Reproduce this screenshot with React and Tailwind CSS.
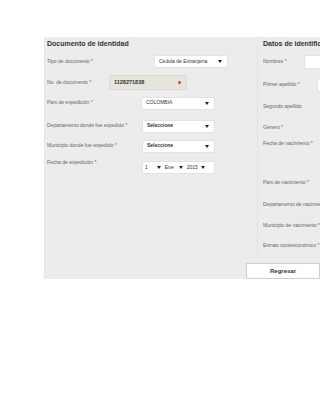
const Tri = () => (
  <svg width="4" height="3" viewBox="0 0 4 3" className="shrink-0">
    <path d="M0 0 L4 0 L2 3 Z" fill="#222" />
  </svg>
);

const Sel = ({ text, w, bold }) => (
  <div
    className={`flex h-[13px] items-center justify-between rounded-[2px] border border-[#e2e2e2] bg-white pl-[4px] pr-[5px] text-[5px] text-[#333] ${bold ? "font-bold" : ""}`}
    style={{ width: w }}
  >
    <span>{text}</span>
    <Tri />
  </div>
);

const Label = ({ children, w }) => (
  <div className="shrink-0 pl-[2px] text-[5px] text-[#666]" style={{ width: w }}>
    {children}
  </div>
);

export default function App() {
  return (
    <div
      className="h-[414px] w-[320px] overflow-hidden bg-white pl-[44px] pt-[37px]"
      style={{ fontFamily: '"Liberation Sans", Arial, sans-serif' }}
    >
      <div className="flex h-[242px] w-[276px] flex-col border-l border-[#e6e6e6] bg-[#ececec]">
        <div className="flex h-[219px]">
          {/* Left column */}
          <div className="flex w-[212px] shrink-0 flex-col">
            <div className="flex h-[14px] items-center pl-[2px] text-[7px] font-bold text-[#333]">
              Documento de identidad
            </div>
            <div className="mt-[3px] flex h-[15px] items-center">
              <Label w={109}>Tipo de documento *</Label>
              <Sel text="Cédula de Extranjería" w={74} />
            </div>
            <div className="mt-[5px] flex h-[17px] items-center">
              <Label w={64}>No. de documento *</Label>
              <div className="flex h-[15px] w-[78px] items-center justify-between rounded-[2px] border border-[#dcdad0] bg-[#e6e4dc] pl-[4px] pr-[5px]">
                <span className="text-[5.5px] font-bold text-[#333]">1128271838</span>
                <span className="h-[3px] w-[3px] rounded-full bg-[#e0383c]" />
              </div>
            </div>
            <div className="mt-[4px] flex h-[16px] items-center">
              <Label w={96}>País de expedición *</Label>
              <Sel text="COLOMBIA" w={74} />
            </div>
            <div className="mt-[7px] flex h-[16px] items-center">
              <Label w={97}>Departamento donde fue expedido *</Label>
              <Sel text="Seleccione" w={73} bold />
            </div>
            <div className="mt-[4px] flex h-[16px] items-center">
              <Label w={97}>Municipio donde fue expedido *</Label>
              <Sel text="Seleccione" w={73} bold />
            </div>
            <div className="mt-[4px] flex h-[17px] items-start">
              <div className="w-[97px] shrink-0 pl-[2px] pt-[1px] text-[5px] text-[#666]">
                Fecha de expedición *
              </div>
              <div className="mt-[3px] flex h-[13px] w-[73px] items-center rounded-[2px] border border-[#e2e2e2] bg-white pl-[2px] text-[5px] text-[#333]">
                <span>1</span>
                <span className="ml-[9px]"><Tri /></span>
                <span className="ml-[4px]">Ene</span>
                <span className="ml-[5px]"><Tri /></span>
                <span className="ml-[4px]">2015</span>
                <span className="ml-[3px]"><Tri /></span>
              </div>
            </div>
          </div>
          {/* Divider */}
          <div className="w-px shrink-0 bg-[#e2e2e2]" />
          {/* Right column */}
          <div className="flex min-w-0 flex-1 flex-col overflow-hidden pl-[5px]">
            <div className="flex h-[14px] items-center whitespace-nowrap text-[7px] font-bold text-[#333]">
              Datos de identificación
            </div>
            <div className="mt-[4px] flex h-[14px] items-center">
              <div className="w-[41px] shrink-0 whitespace-nowrap text-[5px] text-[#666]">Nombres *</div>
              <div className="h-[14px] w-[30px] shrink-0 rounded-[2px] border border-[#e2e2e2] bg-white" />
            </div>
            <div className="mt-[9px] flex h-[14px] items-center">
              <div className="w-[54px] shrink-0 whitespace-nowrap text-[5px] text-[#666]">Primer apellido *</div>
              <div className="h-[14px] w-[30px] shrink-0 rounded-[2px] border border-[#e2e2e2] bg-white" />
            </div>
            <div className="mt-[8px] flex h-[14px] items-center whitespace-nowrap text-[5px] text-[#666]">Segundo apellido</div>
            <div className="mt-[7px] flex h-[14px] items-center whitespace-nowrap text-[5px] text-[#666]">Género *</div>
            <div className="mt-[2px] flex h-[14px] items-center whitespace-nowrap text-[5px] text-[#666]">Fecha de nacimiento *</div>
            <div className="mt-[25px] flex h-[14px] items-center whitespace-nowrap text-[5px] text-[#666]">País de nacimiento *</div>
            <div className="mt-[8px] flex h-[14px] items-center whitespace-nowrap text-[5px] text-[#666]">Departamento de nacimiento *</div>
            <div className="mt-[7px] flex h-[14px] items-center whitespace-nowrap text-[5px] text-[#666]">Municipio de nacimiento *</div>
            <div className="mt-[6px] flex h-[14px] items-center whitespace-nowrap text-[5px] text-[#666]">Estrato socioeconómico *</div>
          </div>
        </div>
        <div className="flex flex-1 items-end justify-end pb-[0px]">
          <div className="flex h-[16px] w-[74px] items-center justify-center border border-[#cfcfcf] bg-white text-[6px] font-bold text-[#333]">
            Regresar
          </div>
        </div>
      </div>
    </div>
  );
}
